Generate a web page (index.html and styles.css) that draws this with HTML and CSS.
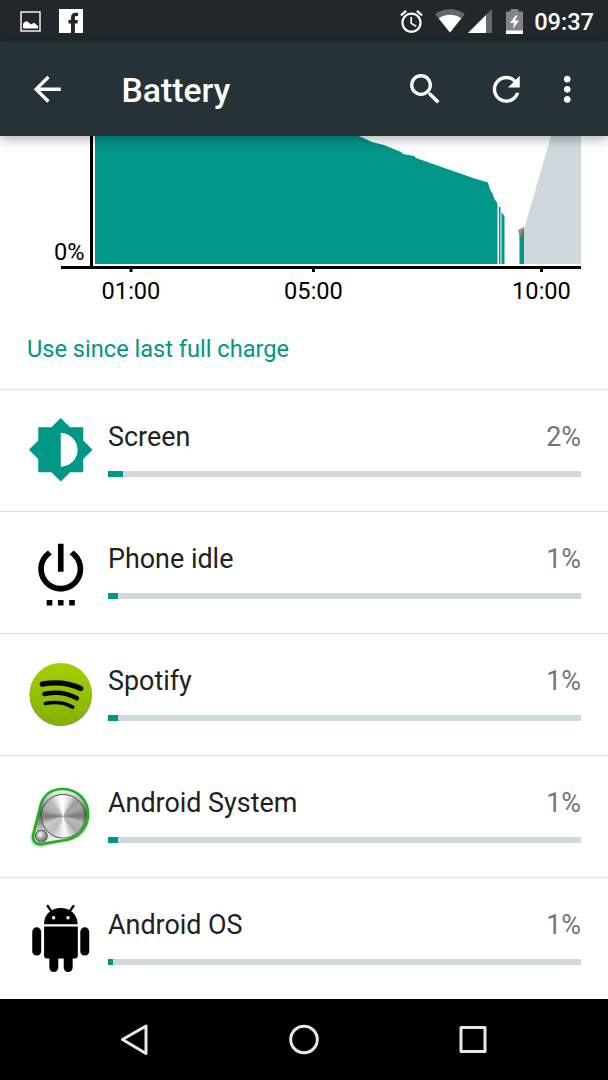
FILE: index.html
```
<!DOCTYPE html>
<html lang="en">
<head>
    <meta charset="UTF-8">
    <meta name="viewport" content="width=device-width, initial-scale=1.0">
    <title>Battery</title>
    <link rel="stylesheet" href="styles.css">
</head>
<body>
    <div class="status-bar">
        <svg width="21" height="21" viewBox="0 0 21 21">
            <rect x="1" y="1" width="19" height="19" fill="none" stroke="#fff" stroke-width="1.4"/>
            <path d="M3 17.5v-4.7l2-2 2-.6 4 3.2 3-1.7 4 3.4v2.4z" fill="#fff"/>
        </svg>
        <svg class="facebook" width="24" height="24" viewBox="0 0 24 24">
            <rect width="24" height="24" fill="#fff"/>
            <path d="M12 24v-9.500H9.500v-3.500H12V8.500C12 5.300 13.700 3.700 16.500 3.700h2.600v3.400h-1.600c-1.200 0-1.600.6-1.600 1.700V11h3l-.4 3.500H15.900V24z" fill="#21272b"/>
        </svg>
        <div class="status-right">
            <svg width="27" height="27" viewBox="0 0 24 24" fill="#fff"><path d="M22 5.720l-4.600-3.860-1.290 1.530 4.600 3.860L22 5.720zM7.880 3.390L6.600 1.860 2 5.710l1.290 1.530 4.590-3.850zM12.500 8H11v6l4.750 2.850.75-1.230-4-2.370V8zM12 4c-4.970 0-9 4.030-9 9s4.020 9 9 9c4.970 0 9-4.030 9-9s-4.030-9-9-9zm0 16c-3.870 0-7-3.130-7-7s3.130-7 7-7 7 3.130 7 7-3.130 7-7 7z"/></svg>
            <svg class="wifi" width="30" height="24" viewBox="0 0 30 24">
                <path d="M15 23.500L0 5.200C8-1.400 22-1.400 30 5.200z" fill="#66696b"/>
                <path d="M15 23.500L3.800 9.500c6-5 16.400-5 22.400 0z" fill="#fff"/>
            </svg>
            <svg class="signal" width="24" height="24" viewBox="0 0 24 24">
                <path d="M24 0v24H0z" fill="#66696b"/>
                <path d="M18 6v18H0z" fill="#fff"/>
            </svg>
            <svg class="charge" width="17" height="25" viewBox="0 0 17 25">
                <path d="M4.500 0h8v2.500H17V25H0V2.500h4.500z" fill="#828586"/>
                <path d="M0 21.500h17V25H0zM9.500 6.500L4 14h4l-1 6 6-8.500H9l2.500-5z" fill="#fff"/>
            </svg>
            <span class="clock">09:37</span>
        </div>
    </div>

    <div class="toolbar">
        <svg class="action" viewBox="0 0 24 24"><path d="M20 11H7.830l5.590-5.590L12 4l-8 8 8 8 1.410-1.410L7.830 13H20v-2z"/></svg>
        <h1>Battery</h1>
        <svg class="action" viewBox="0 0 24 24"><path d="M15.500 14h-.79l-.28-.27C15.410 12.590 16 11.110 16 9.500 16 5.910 13.090 3 9.500 3S3 5.910 3 9.500 5.910 16 9.500 16c1.610 0 3.090-.59 4.230-1.570l.27.28v.79l5 4.990L20.490 19l-4.990-5zm-6 0C7.010 14 5 11.990 5 9.500S7.010 5 9.500 5 14 7.010 14 9.500 11.990 14 9.500 14z"/></svg>
        <svg class="action refresh" viewBox="0 0 24 24"><path d="M17.650 6.350C16.200 4.900 14.210 4 12 4c-4.420 0-7.990 3.580-7.990 8s3.570 8 7.990 8c3.730 0 6.840-2.550 7.730-6h-2.080c-.82 2.330-3.040 4-5.650 4-3.310 0-6-2.690-6-6s2.690-6 6-6c1.660 0 3.140.69 4.220 1.780L13 11h7V4l-2.350 2.350z"/></svg>
        <svg class="action more" viewBox="0 0 24 24"><path d="M12 8c1.100 0 2-.9 2-2s-.9-2-2-2-2 .9-2 2 .9 2 2 2zm0 2c-1.100 0-2 .9-2 2s.9 2 2 2 2-.9 2-2-.9-2-2-2zm0 6c-1.100 0-2 .9-2 2s.9 2 2 2 2-.9 2-2-.9-2-2-2z"/></svg>
    </div>

    <div class="content">
        <svg class="chart" width="608" height="174" viewBox="0 136 608 174">
            <!-- projected charge -->
            <path d="M524 264V229L551 136h30v128z" fill="#cfd8dc"/>
            <!-- battery level -->
            <path d="M95 264V136h264l13 6 12 3 17 7 2 2 11 2 2 2 57 20 15 4.500 2 7 3 5 1 4 3 4 .5 4v57.500z" fill="#009688"/>
            <path d="M499 207h1.500v57H499zM501.500 212l3 4.500V264h-3zM519.500 234h4.500v30h-4.500z" fill="#009688"/>
            <path d="M518 230l6-3v6l-4 5z" fill="#8d9186"/>
            <path d="M519.500 238l4.500-9v4l-4 6z" fill="#5c7a12"/>
            <!-- axes -->
            <path d="M90 136h3v130h-3zM61 266h520v3H61zM129.500 269h3v3h-3zM312 269h3v3h-3zM540 269h3v3h-3z"/>
            <text x="54" y="260">0%</text>
            <text class="tick" x="131" y="299">01:00</text>
            <text class="tick" x="313.500" y="299">05:00</text>
            <text class="tick" x="541.500" y="299">10:00</text>
        </svg>

        <h2>Use since last full charge</h2>

        <div class="row">
            <svg class="icon" viewBox="0 0 24 24" fill="#009688"><path d="M20 15.310L23.310 12 20 8.690V4h-4.690L12 .69 8.690 4H4v4.690L.69 12 4 15.310V20h4.690L12 23.310 15.310 20H20v-4.690zM12 18V6c3.310 0 6 2.690 6 6s-2.690 6-6 6z"/></svg>
            <div class="usage">
                <div class="label"><span>Screen</span><span class="percent">2%</span></div>
                <div class="bar"><div class="fill" style="width: 15px"></div></div>
            </div>
        </div>
        <div class="row">
            <svg class="icon" viewBox="0 0 24 24"><path d="M7 24h2v-2H7v2zm4 0h2v-2h-2v2zm2-22h-2v10h2V2zm3.560 2.440l-1.450 1.450C16.840 6.940 18 8.830 18 11c0 3.310-2.690 6-6 6s-6-2.690-6-6c0-2.170 1.160-4.060 2.880-5.120L7.440 4.440C5.360 5.880 4 8.280 4 11c0 4.420 3.580 8 8 8s8-3.580 8-8c0-2.720-1.360-5.120-3.440-6.560zM15 24h2v-2h-2v2z"/></svg>
            <div class="usage">
                <div class="label"><span>Phone idle</span><span class="percent">1%</span></div>
                <div class="bar"><div class="fill" style="width: 10px"></div></div>
            </div>
        </div>
        <div class="row">
            <svg class="icon" viewBox="0 0 68 68">
                <defs>
                    <linearGradient id="spotify" x1="0" y1="0" x2="0" y2="1">
                        <stop offset="0" stop-color="#a4cf00"/>
                        <stop offset="1" stop-color="#84b000"/>
                    </linearGradient>
                </defs>
                <circle cx="34" cy="35.200" r="31.500" fill="#8a9670"/>
                <circle cx="34" cy="34.300" r="31.300" fill="url(#spotify)"/>
                <g fill="none" stroke="#000" stroke-linecap="round">
                    <path d="M15.500 24.300c13-2.500 27-1 38.500 4.300" stroke-width="5.400"/>
                    <path d="M17.500 34.300c11-2.500 23-1.200 32.800 4.200" stroke-width="4.500"/>
                    <path d="M18.500 43.800c10-2 19-1.200 27.500 3.700" stroke-width="3.700"/>
                </g>
            </svg>
            <div class="usage">
                <div class="label"><span>Spotify</span><span class="percent">1%</span></div>
                <div class="bar"><div class="fill" style="width: 10px"></div></div>
            </div>
        </div>
        <div class="row">
            <svg class="icon" viewBox="0 0 68 68">
                <defs>
                    <filter id="soft" x="-20%" y="-20%" width="140%" height="140%"><feGaussianBlur stdDeviation="1.500"/></filter>
                    <linearGradient id="plate" x1="0" y1="0" x2="0" y2="1">
                        <stop offset="0" stop-color="#fff"/>
                        <stop offset=".45" stop-color="#555"/>
                        <stop offset=".8" stop-color="#ddd"/>
                        <stop offset="1" stop-color="#f4f4f4"/>
                    </linearGradient>
                </defs>
                <path d="M12.500 27C16 11 25 6.500 36 6.500c15 0 26 11 26 25 0 15-10 24-22 25.500L14 63c-7 0-10.500-5-8.500-11z" transform="translate(0 1.500)" fill="#777" filter="url(#soft)"/>
                <path d="M12.800 27C15.500 12 25.500 7 36 7c14.500 0 25.500 11 25.500 25 0 14-10 24.500-22.500 26.500L14 62.500c-6.500 0-9-5-7.500-10z" fill="url(#plate)" stroke="#18b41c" stroke-width="2.600"/>
                <foreignObject x="14" y="12" width="45" height="45"><div class="dial"></div></foreignObject>
                <foreignObject x="8" y="48" width="13" height="13"><div class="dial small"></div></foreignObject>
            </svg>
            <div class="usage">
                <div class="label"><span>Android System</span><span class="percent">1%</span></div>
                <div class="bar"><div class="fill" style="width: 10px"></div></div>
            </div>
        </div>
        <div class="row">
            <svg class="icon" viewBox="0 0 68 68">
                <path d="M17.200 20.300C17.200 10 25 4 34 4s17 6 17 16.300zM17.200 22.700h34V52a3 3 0 0 1-3 3h-28a3 3 0 0 1-3-3z"/>
                <path d="M20.800 2l4.200 6M46.800 2l-4.200 6" stroke="#000" stroke-width="2.300" stroke-linecap="round"/>
                <rect x="5.300" y="23.500" width="9" height="28.500" rx="4.500"/>
                <rect x="53.700" y="23.500" width="9" height="28.500" rx="4.500"/>
                <rect x="22.500" y="46" width="9" height="22.500" rx="4.500"/>
                <rect x="37" y="46" width="9" height="22.500" rx="4.500"/>
                <path d="M25.300 12.300h3v3h-3zM39.800 12.300h3v3h-3z" fill="#fff"/>
            </svg>
            <div class="usage">
                <div class="label"><span>Android OS</span><span class="percent">1%</span></div>
                <div class="bar"><div class="fill" style="width: 5px"></div></div>
            </div>
        </div>
    </div>

    <div class="nav-bar">
        <svg width="32" height="32" viewBox="0 0 32 32"><path d="M27 2v27.500L3.500 15.500z"/></svg>
        <svg width="32" height="32" viewBox="0 0 32 32"><circle cx="16" cy="15.500" r="13.300"/></svg>
        <svg width="32" height="32" viewBox="0 0 32 32"><rect x="4" y="3.500" width="24" height="24"/></svg>
    </div>
</body>
</html>
```

FILE: styles.css
```
* {
    box-sizing: border-box;
}

body {
    margin: 0;
    width: 608px;
    height: 1080px;
    overflow: hidden;
    display: flex;
    flex-direction: column;
    background: #fff;
    font-family: Roboto, sans-serif;
}

svg {
    display: block;
    flex-shrink: 0;
    overflow: visible;
}

.status-bar {
    height: 42px;
    padding: 0 14px 0 20px;
    display: flex;
    align-items: center;
    background: #21272b;
    color: #fff;
}

.facebook {
    margin-left: 18px;
}

.status-right {
    margin-left: auto;
    display: flex;
    align-items: center;
}

.wifi {
    margin-left: 10px;
}

.signal {
    margin-left: 3px;
}

.charge {
    margin-left: 14px;
}

.clock {
    margin-left: 11px;
    padding-top: 2px;
    font-size: 23.6px;
    font-weight: 500;
    line-height: 40px;
}

.toolbar {
    position: relative;
    height: 94px;
    padding: 1px 20.5px 0 27px;
    display: flex;
    align-items: center;
    background: #263238;
    color: #fff;
    box-shadow: 0 4px 10px rgba(0, 0, 0, 0.28);
}

.action {
    width: 40.5px;
    height: 40.5px;
    fill: #fff;
}

.refresh {
    margin-left: 41px;
}

.more {
    margin-left: 20.5px;
}

h1 {
    margin: 2px auto 0 54px;
    font-size: 33.75px;
    font-weight: 500;
    line-height: 40px;
}

.content {
    flex: 1;
}

.chart {
    font-size: 23.6px;
}

.tick {
    text-anchor: middle;
}

h2 {
    margin: 0;
    height: 79px;
    padding-left: 27px;
    color: #009688;
    font-size: 23.6px;
    font-weight: 400;
    line-height: 78px;
}

.row {
    height: 122px;
    padding: 0 27px 2px;
    display: flex;
    align-items: center;
    gap: 13.5px;
    border-top: 1px solid #e0e0e0;
}

.icon {
    width: 67.5px;
    height: 67.5px;
}

.usage {
    flex: 1;
    margin-top: -1px;
}

.label {
    display: flex;
    justify-content: space-between;
    color: #212121;
    font-size: 26.9px;
    line-height: 32px;
}

.percent {
    color: #757575;
}

.bar {
    height: 5.5px;
    margin-top: 18px;
    background: #cfd8dc;
}

.fill {
    height: 100%;
    background: #009688;
}

.dial {
    width: 100%;
    height: 100%;
    border: 1px solid #555;
    border-radius: 50%;
    background: conic-gradient(#fff, #ddd 20deg, #999 40deg, #aaa 60deg, #777 90deg, #bbb 110deg, #aaa 140deg, #fff 175deg, #bbb 215deg, #ccc 245deg, #777 270deg, #aaa 290deg, #bbb 320deg, #fff 350deg);
}

.small {
    border-color: #444;
    background: radial-gradient(circle at 40% 35%, #fff, #aaa 40%, #444);
}

.nav-bar {
    height: 81px;
    display: flex;
    align-items: center;
    justify-content: center;
    gap: 137px;
    background: #000;
}

.nav-bar svg {
    fill: none;
    stroke: #e8e8e8;
    stroke-width: 3;
    stroke-linejoin: round;
}
```
